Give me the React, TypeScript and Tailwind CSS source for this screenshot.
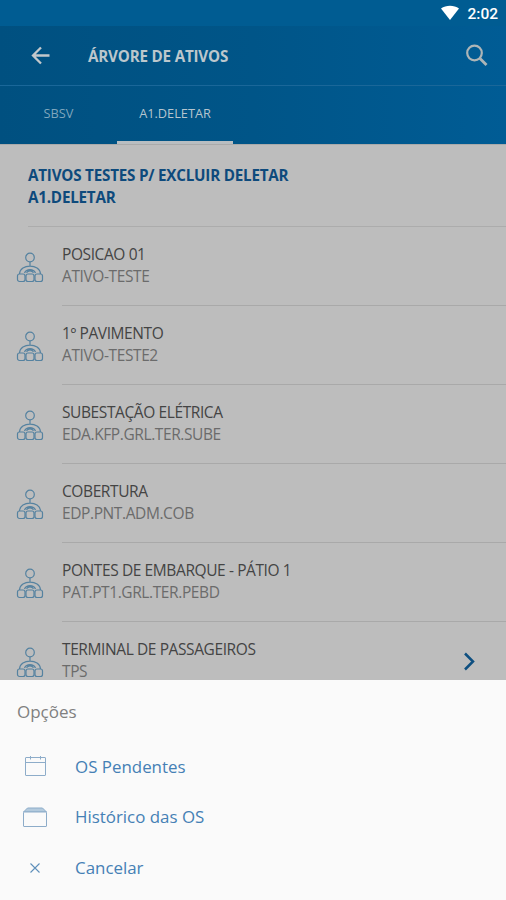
import React from 'react'

const assets = [
  { name: 'POSICAO 01', code: 'ATIVO-TESTE' },
  { name: '1º PAVIMENTO', code: 'ATIVO-TESTE2' },
  { name: 'SUBESTAÇÃO ELÉTRICA', code: 'EDA.KFP.GRL.TER.SUBE' },
  { name: 'COBERTURA', code: 'EDP.PNT.ADM.COB' },
  { name: 'PONTES DE EMBARQUE - PÁTIO 1', code: 'PAT.PT1.GRL.TER.PEBD' },
  { name: 'TERMINAL DE PASSAGEIROS', code: 'TPS', hasChildren: true },
]

const TreeIcon = () => (
  <svg width="28" height="32" viewBox="0 0 28 32" fill="none" stroke="#5582a0" strokeWidth="1.2">
    <circle cx="14" cy="5.5" r="4.3" />
    <path d="M14 10v4M3.500 22C4 11.500 24 11.500 24.500 22M8.500 21c2-4.500 9-4.500 11 0M10.500 20.800c1.500-2.600 5.500-2.600 7 0" />
    <rect x="1.500" y="22" width="7.500" height="7.500" rx="2" />
    <rect x="10" y="22" width="8" height="7.500" rx="2" />
    <rect x="19" y="22" width="7.500" height="7.500" rx="2" />
  </svg>
)

const CalendarIcon = () => (
  <svg width="24" height="24" viewBox="0 0 24 24" fill="none" stroke="#8dacc9">
    <rect x="2.500" y="3.500" width="20" height="18" rx="0.500" />
    <path d="M2.500 8.500h20M7.500 2v3.500M17.500 2v3.500" />
  </svg>
)

const BoxIcon = () => (
  <svg width="24" height="24" viewBox="0 0 24 24" fill="none" stroke="#8dacc9">
    <path d="M.5 7 4.500 3h15l4 4z" fill="#b3cadd" />
    <rect x=".5" y="7" width="23" height="14.500" rx="0.500" fill="#fafafa" />
  </svg>
)

const CloseIcon = () => (
  <svg width="24" height="24" viewBox="0 0 24 24" fill="none" stroke="#5e8fba" strokeWidth="1.1">
    <path d="m7.500 7.500 9 9m0-9-9 9" />
  </svg>
)

const options = [
  { icon: CalendarIcon, label: 'OS Pendentes' },
  { icon: BoxIcon, label: 'Histórico das OS' },
  { icon: CloseIcon, label: 'Cancelar' },
]

const App: React.FC = () => {
  return (
    <div className="flex h-[900px] w-[506px] flex-col overflow-hidden bg-[#bdbdbd] font-['Open_Sans','Noto_Sans',sans-serif]">
      {/* Status bar */}
      <div className="flex h-[26px] shrink-0 items-center justify-end gap-[7px] bg-[#005c92] pr-[8px] text-white">
        <svg width="20" height="16" viewBox="0 0 20 16" fill="currentColor">
          <path d="M1 3.500C6-.2 14-.2 19 3.500L10 15z" />
        </svg>
        <span className="pt-[4px] font-['Roboto',sans-serif] text-[15.500px] font-medium leading-none">2:02</span>
      </div>

      {/* Header and tabs */}
      <header className="shrink-0 bg-linear-to-r from-[#005080] via-[#005588] to-[#005c95]">
        <div className="flex h-[60px] items-center border-b border-[#1a6799] pl-[31px] pr-[18px]">
          <svg width="20" height="20" viewBox="0 0 20 20" fill="none" stroke="#c3c8cb" strokeWidth="2.300">
            <path d="M18.500 9.500H3M10 1.500l-8 8 8 8" />
          </svg>
          <h1 className="ml-[37px] grow pt-[2px] text-[15.200px] font-bold tracking-[-0.200px] text-[#bcc7cd]">ÁRVORE DE ATIVOS</h1>
          <svg width="23" height="23" viewBox="0 0 23 23" fill="none" stroke="#adb5b7" strokeWidth="2.200">
            <circle cx="9.500" cy="9" r="7.300" />
            <path d="m15 14.500 6.500 6.500" strokeWidth="2.800" />
          </svg>
        </div>
        <div className="flex h-[58px] text-[12.750px]">
          <div className="flex w-[117px] items-center justify-center pb-[2px] text-[#7fa6bd]">SBSV</div>
          <div className="flex w-[116px] items-center justify-center border-b-[3px] border-[#b9bec1] pt-px text-[#b6c5ce]">A1.DELETAR</div>
        </div>
      </header>

      {/* Asset list */}
      <main className="min-h-0 grow overflow-hidden border-t border-[#aaa]">
        <div className="ml-[28px] h-[81.500px] border-b border-[#acacac] pt-[19px] text-[15.200px] font-bold leading-[22px] tracking-[-0.210px] text-[#0e4a7c]">
          <p>ATIVOS TESTES P/ EXCLUIR DELETAR</p>
          <p>A1.DELETAR</p>
        </div>
        {assets.map(({ name, code, hasChildren }) => (
          <div key={name} className="flex h-[79.100px]">
            <div className="w-[62px] shrink-0 pl-[16px] pt-[25px]">
              <TreeIcon />
            </div>
            <div className="flex grow items-center justify-between border-b border-[#a9a9a9] pr-[29px]">
              <div className="pb-[2px] text-[15.500px] leading-[22px] tracking-[-0.400px]">
                <p className="text-[#444]">{name}</p>
                <p className="text-[#6b6b6b]">{code}</p>
              </div>
              {hasChildren && (
                <svg width="15" height="20" viewBox="0 0 15 20" fill="none" stroke="#0e4f80" strokeWidth="2.500">
                  <path d="m3 2.500 8 8-8 8" />
                </svg>
              )}
            </div>
          </div>
        ))}
      </main>

      {/* Options sheet */}
      <section className="h-[220px] shrink-0 bg-[#fafafa] pt-[6px]">
        <h2 className="flex h-[55px] items-center pl-[17px] pb-[4px] text-[17px] text-[#808080]">Opções</h2>
        {options.map(({ icon: Icon, label }) => (
          <button key={label} className="flex h-[50.700px] w-full items-center pl-[23px] text-[16.900px] text-[#4580b5]">
            <Icon />
            <span className="ml-[28px]">{label}</span>
          </button>
        ))}
      </section>
    </div>
  )
}

export default App
